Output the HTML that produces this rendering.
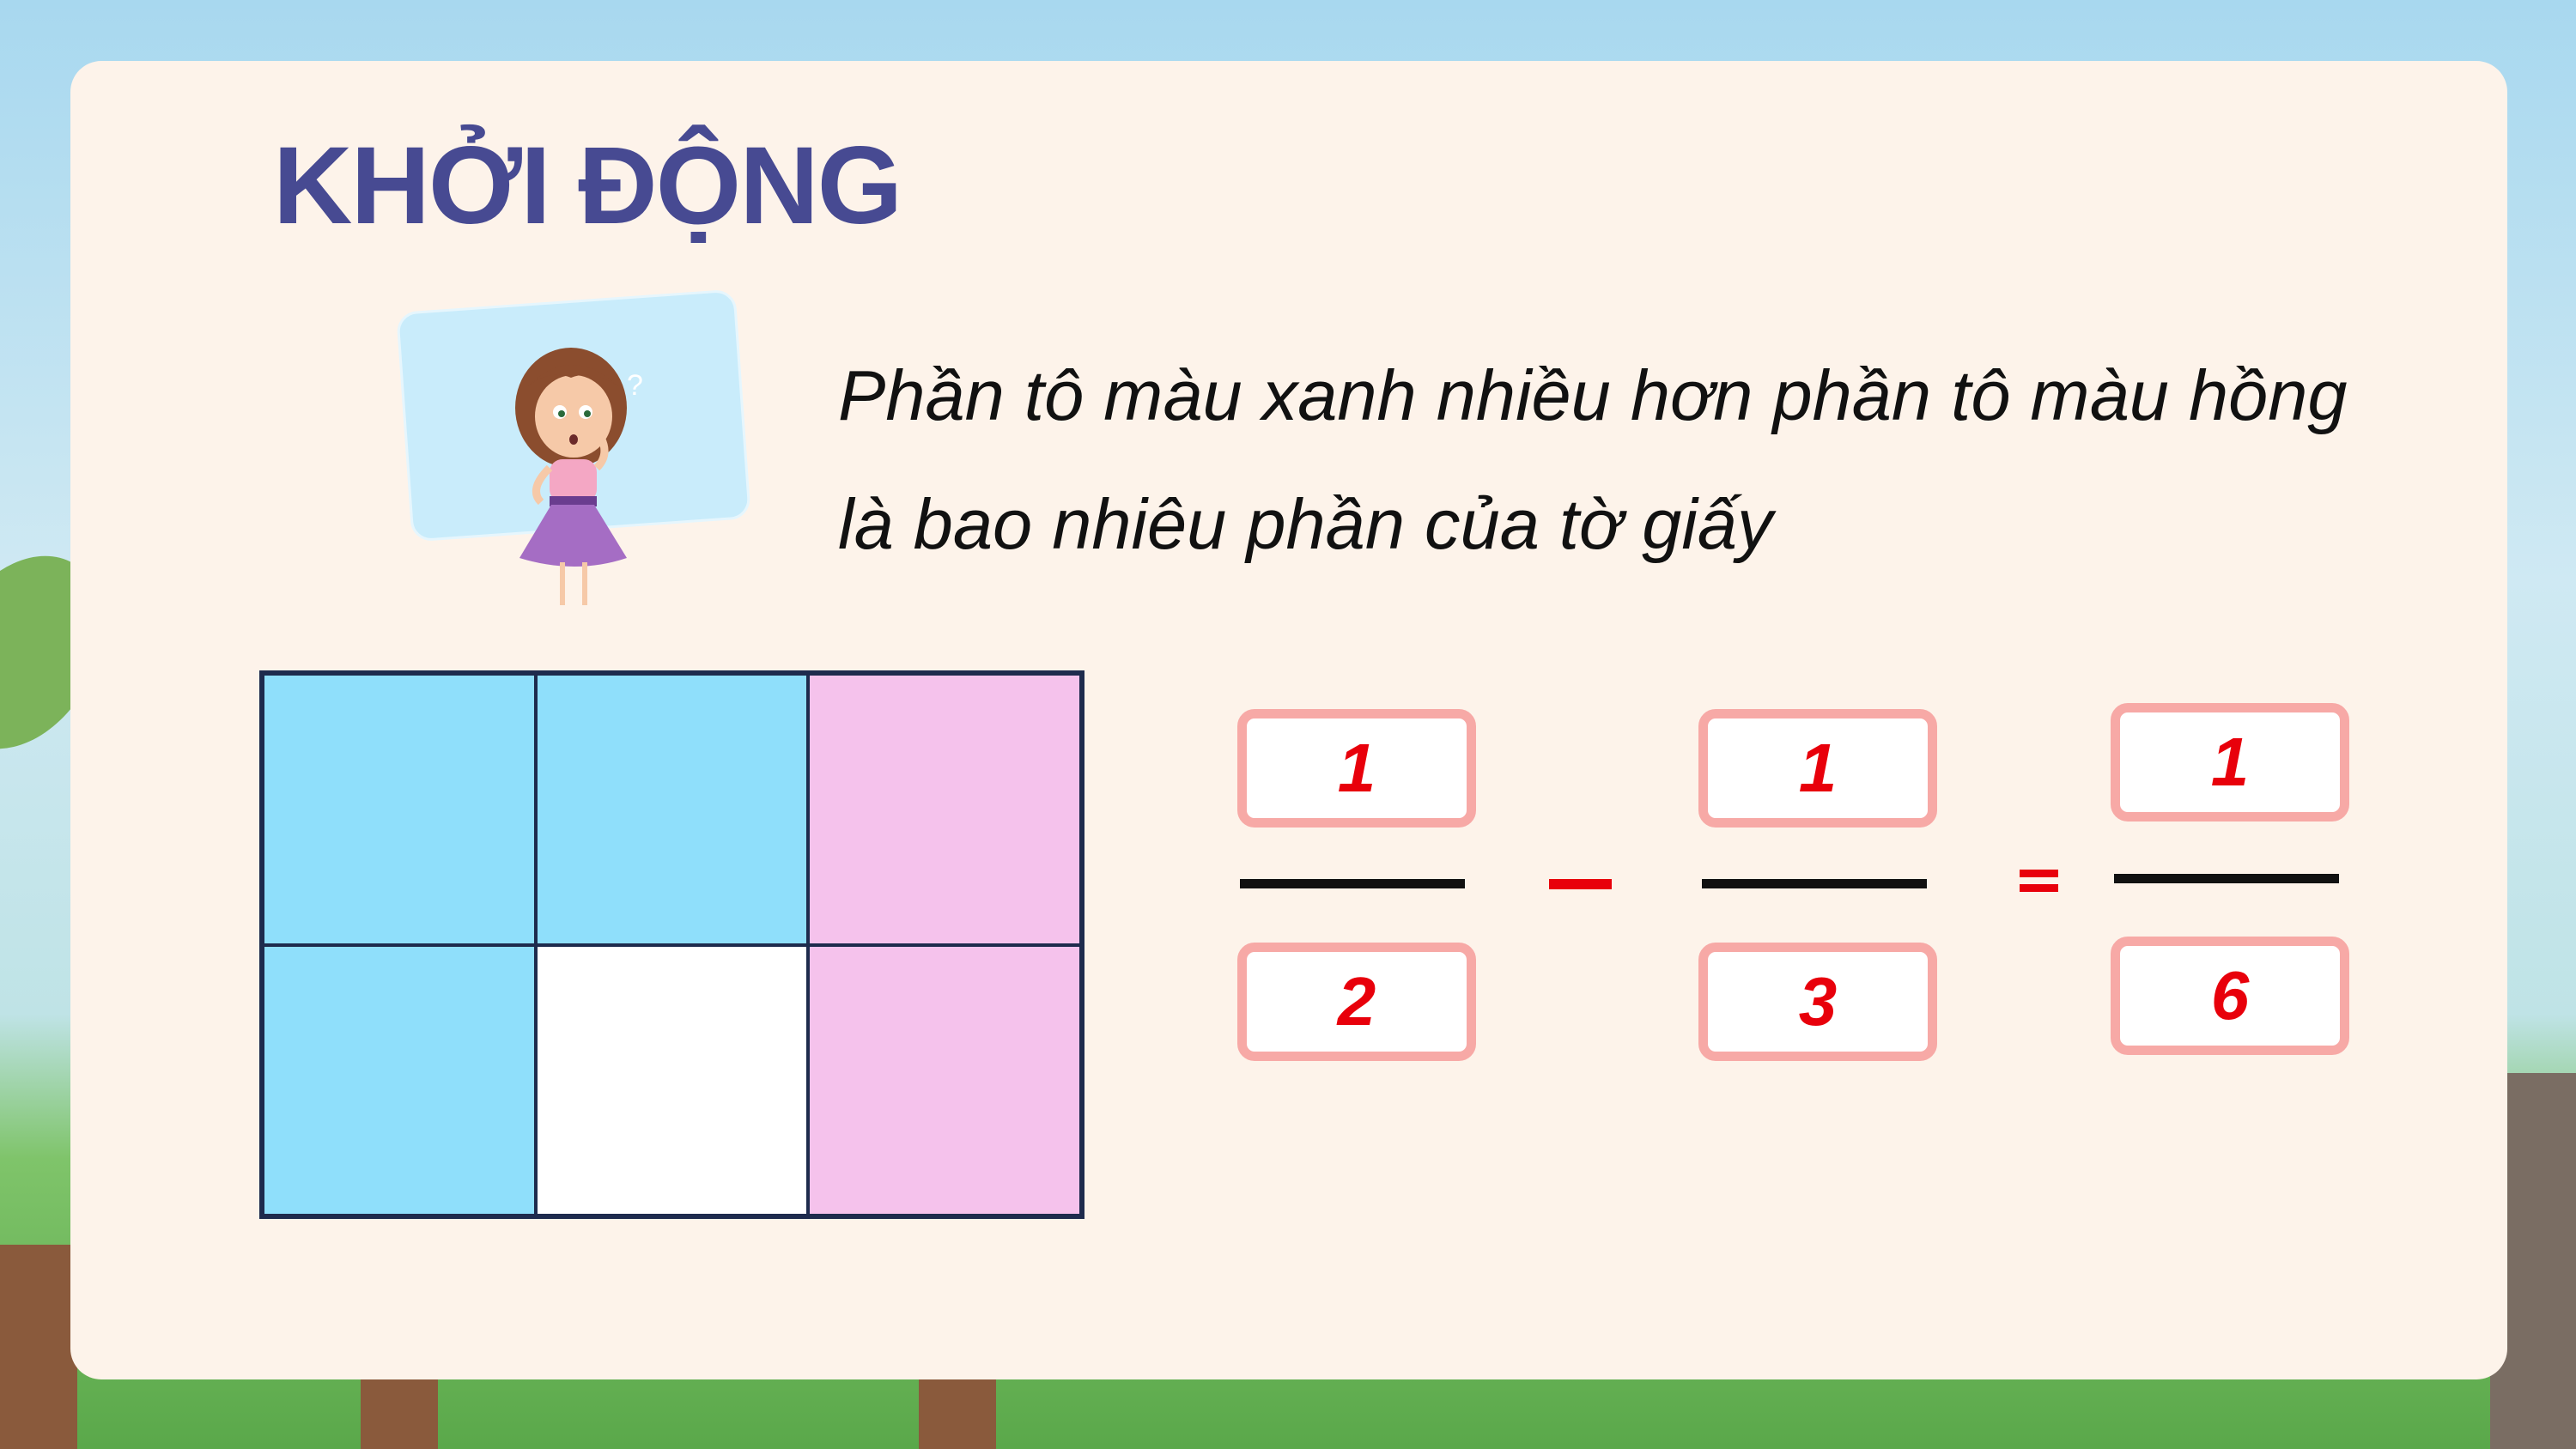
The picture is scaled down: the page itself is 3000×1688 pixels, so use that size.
<!DOCTYPE html>
<html><head><meta charset="utf-8"><style>
html,body{margin:0;padding:0}
body{width:3000px;height:1688px;position:relative;overflow:hidden;background:linear-gradient(#a8d8ef 0%,#cfe9f3 40%,#bfe3e6 70%,#7fc46a 80%,#5aa84a 100%);font-family:"Liberation Sans",sans-serif}
.card{position:absolute;left:82px;top:71px;width:2838px;height:1536px;background:#fdf3ea;border-radius:36px}
.title{position:absolute;left:318px;top:143px;font-size:128px;font-weight:bold;color:#474a92;letter-spacing:-2px;white-space:nowrap}
.q{position:absolute;left:976px;font-size:83px;font-style:italic;color:#111;white-space:nowrap}
.grid{position:absolute;left:302px;top:781px;width:961px;height:639px;border:4px solid #1e2b4d;box-sizing:border-box;display:grid;grid-template-columns:1fr 1fr 1fr;grid-template-rows:1fr 1fr}
.grid div{border:2px solid #1e2b4d}
.b{position:absolute;width:278px;height:138px;box-sizing:border-box;border:11px solid #f7a9a6;border-radius:20px;background:#fff;color:#e8000b;font-weight:bold;font-style:italic;font-size:80px;text-align:center;line-height:116px}
.l{position:absolute;height:11px;background:#111;width:262px}
.r{position:absolute;background:#e8000b}
</style></head><body>
<div style="position:absolute;left:-60px;top:640px;width:170px;height:240px;background:#7cb35a;border-radius:50%;transform:rotate(30deg)"></div>
<div style="position:absolute;left:0;top:1450px;width:90px;height:238px;background:#8a5a3c"></div>
<div style="position:absolute;left:420px;top:1600px;width:90px;height:88px;background:#8a5a3c"></div>
<div style="position:absolute;left:1070px;top:1600px;width:90px;height:88px;background:#8a5a3c"></div>
<div style="position:absolute;left:2900px;top:1250px;width:100px;height:438px;background:#7a6d63"></div>
<div class="card"></div>
<div class="title">KHỞI ĐỘNG</div>
<div style="position:absolute;left:470px;top:350px;width:390px;height:262px;background:#c9ecfb;border-radius:24px;transform:rotate(-4deg);border:3px solid #e6f6fd"></div>
<svg style="position:absolute;left:570px;top:390px" width="190" height="330" viewBox="0 0 190 330">
<ellipse cx="95" cy="85" rx="65" ry="70" fill="#8b4d2e"/>
<ellipse cx="98" cy="95" rx="45" ry="48" fill="#f6c9a8"/>
<path d="M45 60 Q95 10 150 60 Q120 40 95 50 Q70 40 45 60Z" fill="#8b4d2e"/>
<circle cx="82" cy="90" r="8" fill="#fff"/><circle cx="112" cy="90" r="8" fill="#fff"/>
<circle cx="84" cy="92" r="4" fill="#2a6a3a"/><circle cx="114" cy="92" r="4" fill="#2a6a3a"/>
<ellipse cx="98" cy="122" rx="5" ry="6" fill="#6b2a2a"/>
<rect x="70" y="145" width="55" height="50" rx="15" fill="#f4a7c4"/>
<rect x="70" y="188" width="55" height="12" fill="#6a3d8f"/>
<path d="M72 198 L122 198 L160 260 Q100 280 35 260 Z" fill="#a56dc4"/>
<rect x="82" y="265" width="6" height="50" fill="#f6c9a8"/><rect x="108" y="265" width="6" height="50" fill="#f6c9a8"/>
<path d="M70 155 Q45 180 60 195" stroke="#f6c9a8" stroke-width="9" fill="none"/>
<path d="M125 155 Q140 140 130 120" stroke="#f6c9a8" stroke-width="9" fill="none"/>
<text x="160" y="70" font-size="34" fill="#fff" font-family="Liberation Sans">?</text>
</svg>
<div class="q" style="top:413px">Phần tô màu xanh nhiều hơn phần tô màu hồng</div>
<div class="q" style="top:563px">là bao nhiêu phần của tờ giấy</div>
<div class="grid">
<div style="background:#8fdffb"></div><div style="background:#8fdffb"></div><div style="background:#f5c2ec"></div>
<div style="background:#8fdffb"></div><div style="background:#fff"></div><div style="background:#f5c2ec"></div>
</div>
<div class="b" style="left:1441px;top:826px">1</div>
<div class="l" style="left:1444px;top:1024px"></div>
<div class="b" style="left:1441px;top:1098px">2</div>
<div class="r" style="left:1804px;top:1024px;width:73px;height:12px"></div>
<div class="b" style="left:1978px;top:826px">1</div>
<div class="l" style="left:1982px;top:1024px"></div>
<div class="b" style="left:1978px;top:1098px">3</div>
<div class="r" style="left:2352px;top:1013px;width:45px;height:9px"></div>
<div class="r" style="left:2352px;top:1030px;width:45px;height:9px"></div>
<div class="b" style="left:2458px;top:819px">1</div>
<div class="l" style="left:2462px;top:1018px"></div>
<div class="b" style="left:2458px;top:1091px">6</div>
</body></html>
